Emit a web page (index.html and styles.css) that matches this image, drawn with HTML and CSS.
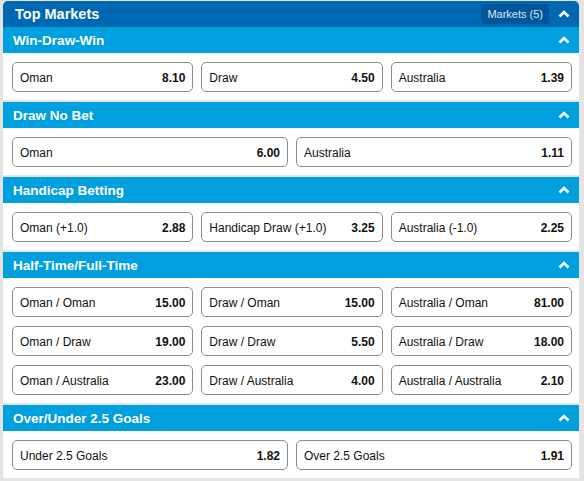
FILE: index.html
```html
<!DOCTYPE html>
<html>
<head>
<meta charset="utf-8">
<link rel="stylesheet" href="styles.css">
</head>
<body>
<div class="panel">
  <div class="top-head">
    <div class="top-title">Top Markets</div>
    <div class="top-right">
      <span class="badge">Markets (5)</span>
      <svg class="chev" width="12" height="8" viewBox="0 0 12 8"><polyline points="1.5,6.5 6,2 10.5,6.5" fill="none" stroke="#fff" stroke-width="2.6"/></svg>
    </div>
  </div>

  <div class="section first">
    <div class="sec-head"><span>Win-Draw-Win</span><svg class="chev" width="12" height="8" viewBox="0 0 12 8"><polyline points="1.5,6.5 6,2 10.5,6.5" fill="none" stroke="#fff" stroke-width="2.6"/></svg></div>
    <div class="sec-body cols3">
      <div class="sel"><span>Oman</span><b>8.10</b></div>
      <div class="sel"><span>Draw</span><b>4.50</b></div>
      <div class="sel"><span>Australia</span><b>1.39</b></div>
    </div>
  </div>

  <div class="section">
    <div class="sec-head"><span>Draw No Bet</span><svg class="chev" width="12" height="8" viewBox="0 0 12 8"><polyline points="1.5,6.5 6,2 10.5,6.5" fill="none" stroke="#fff" stroke-width="2.6"/></svg></div>
    <div class="sec-body cols2">
      <div class="sel"><span>Oman</span><b>6.00</b></div>
      <div class="sel"><span>Australia</span><b>1.11</b></div>
    </div>
  </div>

  <div class="section">
    <div class="sec-head"><span>Handicap Betting</span><svg class="chev" width="12" height="8" viewBox="0 0 12 8"><polyline points="1.5,6.5 6,2 10.5,6.5" fill="none" stroke="#fff" stroke-width="2.6"/></svg></div>
    <div class="sec-body cols3">
      <div class="sel"><span>Oman (+1.0)</span><b>2.88</b></div>
      <div class="sel"><span>Handicap Draw (+1.0)</span><b>3.25</b></div>
      <div class="sel"><span>Australia (-1.0)</span><b>2.25</b></div>
    </div>
  </div>

  <div class="section">
    <div class="sec-head"><span>Half-Time/Full-Time</span><svg class="chev" width="12" height="8" viewBox="0 0 12 8"><polyline points="1.5,6.5 6,2 10.5,6.5" fill="none" stroke="#fff" stroke-width="2.6"/></svg></div>
    <div class="sec-body cols3">
      <div class="sel"><span>Oman / Oman</span><b>15.00</b></div>
      <div class="sel"><span>Draw / Oman</span><b>15.00</b></div>
      <div class="sel"><span>Australia / Oman</span><b>81.00</b></div>
      <div class="sel"><span>Oman / Draw</span><b>19.00</b></div>
      <div class="sel"><span>Draw / Draw</span><b>5.50</b></div>
      <div class="sel"><span>Australia / Draw</span><b>18.00</b></div>
      <div class="sel"><span>Oman / Australia</span><b>23.00</b></div>
      <div class="sel"><span>Draw / Australia</span><b>4.00</b></div>
      <div class="sel"><span>Australia / Australia</span><b>2.10</b></div>
    </div>
  </div>

  <div class="section">
    <div class="sec-head"><span>Over/Under 2.5 Goals</span><svg class="chev" width="12" height="8" viewBox="0 0 12 8"><polyline points="1.5,6.5 6,2 10.5,6.5" fill="none" stroke="#fff" stroke-width="2.6"/></svg></div>
    <div class="sec-body cols2">
      <div class="sel"><span>Under 2.5 Goals</span><b>1.82</b></div>
      <div class="sel"><span>Over 2.5 Goals</span><b>1.91</b></div>
    </div>
  </div>
</div>
</body>
</html>
```

FILE: styles.css
```css
html, body {
  height: 100%;
}
body {
  margin: 0;
  padding: 1px 5px 0 3px;
  box-sizing: border-box;
  background: #e4e4e4;
  font-family: "Liberation Sans", Arial, sans-serif;
  color: #111;
  overflow: hidden;
}
.panel {
  width: 576px;
}
.top-head {
  height: 26px;
  background: #0067b2;
  border-radius: 5px 5px 0 0;
  display: flex;
  align-items: center;
  justify-content: space-between;
  padding: 0 9px 0 12px;
  color: #fff;
}
.top-title {
  font-weight: bold;
  font-size: 14.5px;
}
.top-right {
  display: flex;
  align-items: center;
  gap: 9px;
}
.badge {
  background: #00569a;
  color: #dce6ef;
  font-size: 11px;
  height: 20px;
  line-height: 20px;
  padding: 0 6px;
  border-radius: 4px;
}
.chev {
  display: block;
}
.section {
  margin-top: 2px;
}
.section.first {
  margin-top: 0;
}
.sec-head {
  height: 26px;
  background: #009fde;
  color: #fff;
  font-weight: bold;
  font-size: 13.5px;
  display: flex;
  align-items: center;
  justify-content: space-between;
  padding: 0 9px 0 10px;
}
.sec-body {
  background: #fff;
  padding: 9px 7px 8px 9px;
  display: grid;
  column-gap: 8px;
  row-gap: 9px;
}
.cols3 {
  grid-template-columns: 1fr 1fr 1fr;
}
.cols2 {
  grid-template-columns: 1fr 1fr;
}
.sel {
  height: 30px;
  box-sizing: border-box;
  border: 1px solid #8c8c8c;
  border-radius: 5px;
  display: flex;
  align-items: center;
  justify-content: space-between;
  padding: 1px 7px 0 7px;
  font-size: 12px;
  color: #111;
}
.sel b {
  font-weight: bold;
}
```
